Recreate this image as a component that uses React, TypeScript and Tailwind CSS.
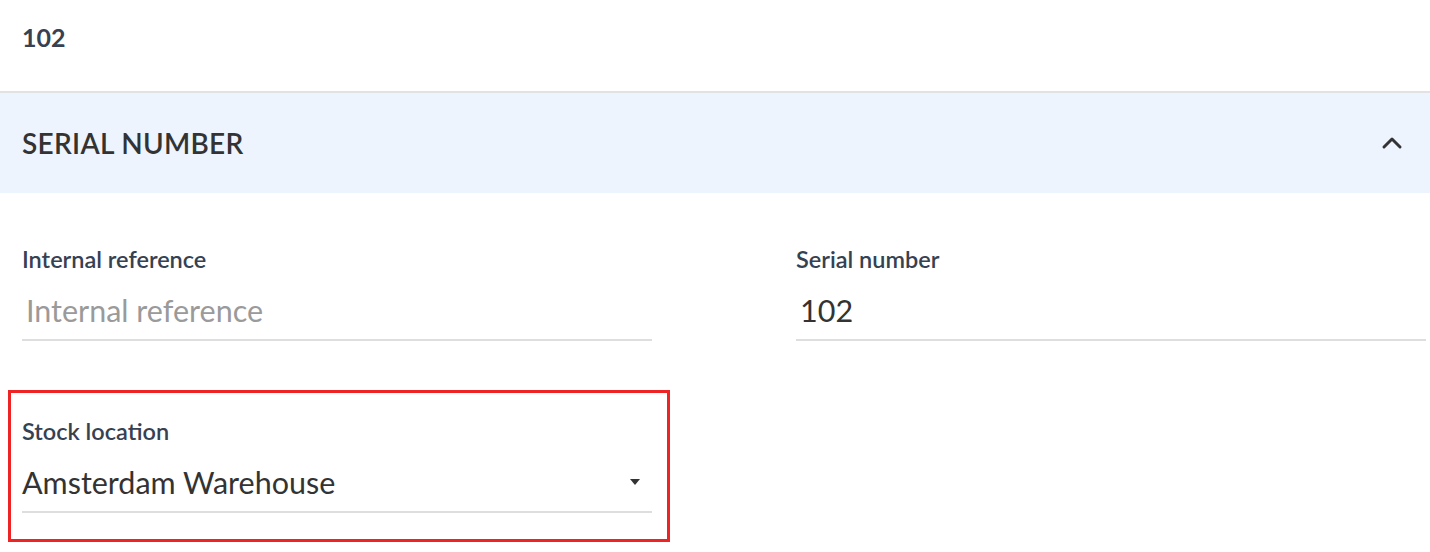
import { ChevronUp } from "lucide-react";

const font = { fontFamily: "Lato, 'Noto Sans', sans-serif" };

function Field({ label, value, placeholder, select }: { label: string; value?: string; placeholder?: string; select?: boolean }) {
  return (
    <div className="flex flex-col">
      <label className="text-[23.5px] leading-[24px] font-semibold text-[#364152]">{label}</label>
      <div className="mt-[19px] flex items-center justify-between border-b-2 border-[#dedede] pb-[9px]">
        <span className={`text-[30.5px] leading-[40px] ${value ? "text-[#333333]" : "text-[#9a9a9a] pl-[4px]"} ${select ? "" : "pl-[4px]"}`}>
          {value ?? placeholder}
        </span>
        {select && (
          <svg width="10" height="6" viewBox="0 0 10 6" className="mr-[12px]">
            <path d="M0 0h10L5 6z" fill="#333" />
          </svg>
        )}
      </div>
    </div>
  );
}

export default function App() {
  return (
    <div className="w-[1430px] h-[552px] bg-white overflow-hidden" style={font}>
      <div className="h-[93px] pl-[22px] pt-[23px] border-b-2 border-[#e2e2e2]">
        <span className="text-[25px] leading-[28px] font-bold text-[#374151]">102</span>
      </div>

      <div className="h-[100px] bg-[#edf4fe] flex items-center justify-between pl-[22px] pr-[22px]">
        <h2 className="text-[28px] font-semibold tracking-[0.3px] text-[#333333]">SERIAL NUMBER</h2>
        <ChevronUp className="w-[32px] h-[32px] text-[#333]" strokeWidth={2.25} />
      </div>

      <div className="pl-[22px] pr-[4px] pt-[54px]">
        <div className="grid grid-cols-2 gap-x-[144px]">
          <Field label="Internal reference" placeholder="Internal reference" />
          <Field label="Serial number" value="102" />
        </div>

        <div className="mt-[49px] -ml-[14px] w-[662px] border-[3px] border-[#ee2424] pt-[26px] pb-[26px] pl-[11px] pr-[15px]">
          <Field label="Stock location" value="Amsterdam Warehouse" select />
        </div>
      </div>
    </div>
  );
}
